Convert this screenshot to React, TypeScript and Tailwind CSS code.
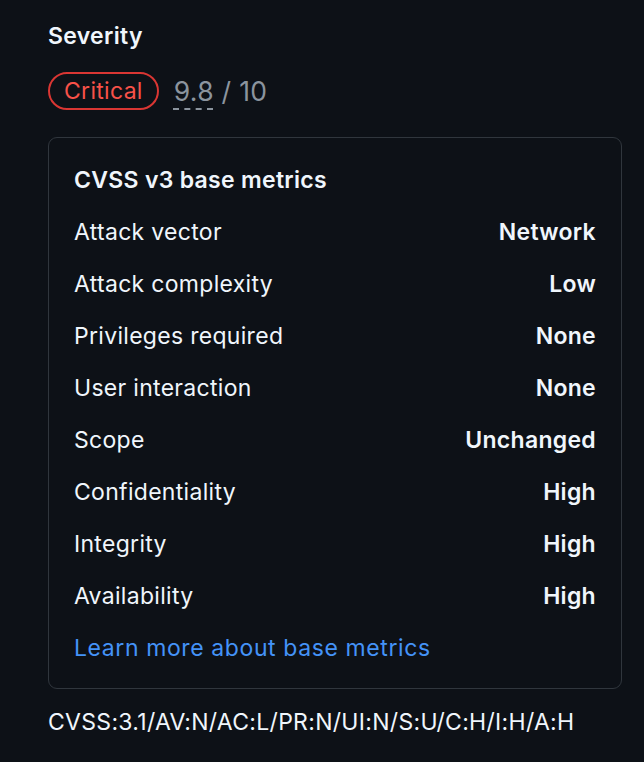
const metrics: [string, string][] = [
  ["Attack vector", "Network"],
  ["Attack complexity", "Low"],
  ["Privileges required", "None"],
  ["User interaction", "None"],
  ["Scope", "Unchanged"],
  ["Confidentiality", "High"],
  ["Integrity", "High"],
  ["Availability", "High"],
];

export default function App() {
  return (
    <div className="min-h-screen w-full bg-[#0d1117] px-[48px] pt-[20px] text-[#f0f6fc] font-['Inter','Noto_Sans',sans-serif] text-[23px] leading-[32px] tracking-[0.3px]">
      <h3 className="font-semibold">Severity</h3>

      <div className="mt-[20px] flex items-center gap-[15px]">
        <span className="inline-flex h-[38px] items-center rounded-full border-[2px] border-[#da3633] px-[14px] text-[#f85149]">
          Critical
        </span>
        <span className="text-[26.5px] text-[#8b949e]">
          <span className="underline decoration-dashed decoration-[1.5px] underline-offset-[7px]">9.8</span> / 10
        </span>
      </div>

      {/* base metrics card */}
      <div className="mt-[27px] w-[574px] rounded-[9px] border-[1.5px] border-[#30363d] px-[25px] pt-[16px] pb-[14px]">
        <div className="flex h-[52px] items-center font-semibold">CVSS v3 base metrics</div>
        {metrics.map(([label, value]) => (
          <div key={label} className="flex h-[52px] items-center justify-between">
            <span>{label}</span>
            <span className="font-semibold">{value}</span>
          </div>
        ))}
        <div className="flex h-[52px] items-center">
          <a href="#" className="tracking-[0.6px] text-[#4493f8]">
            Learn more about base metrics
          </a>
        </div>
      </div>

      <div className="mt-[17px]">CVSS:3.1/AV:N/AC:L/PR:N/UI:N/S:U/C:H/I:H/A:H</div>
    </div>
  );
}
